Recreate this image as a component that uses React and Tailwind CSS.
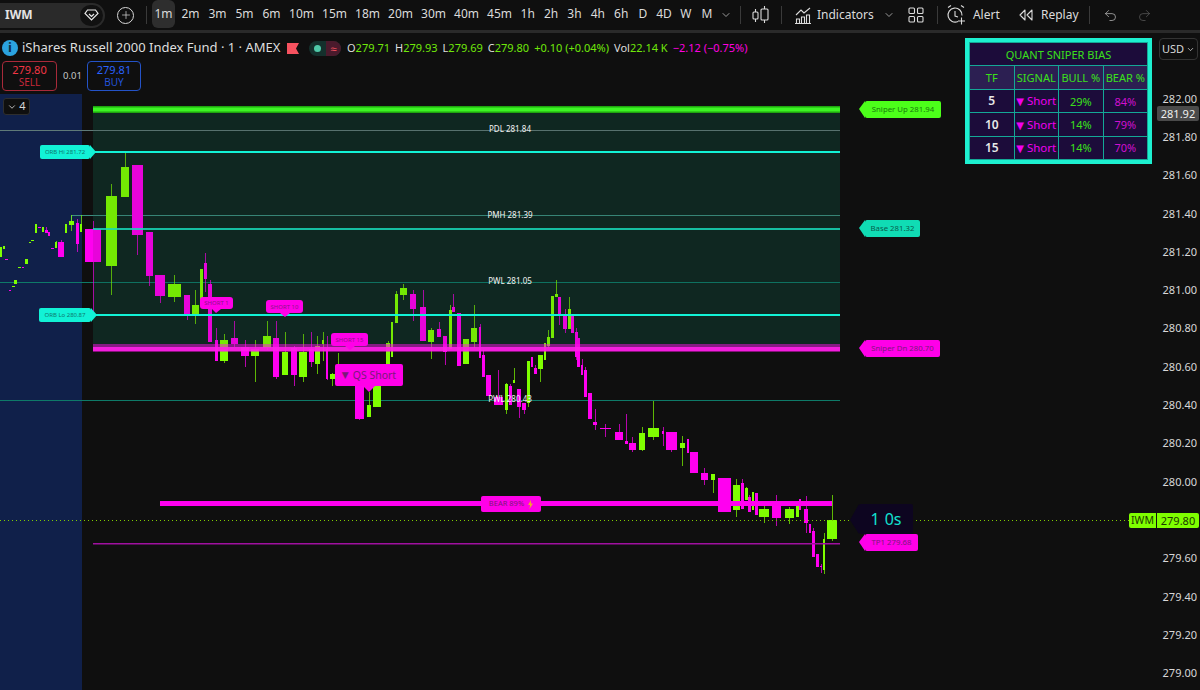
import { ChevronDown, Plus, Redo2, Undo2 } from 'lucide-react'

const intervals = [
  { label: '1m', cls: 'w-[23px] mx-[2px] bg-[#2e2e2e] rounded-md' },
  { label: '2m', cls: 'w-[27px]' },
  { label: '3m', cls: 'w-[27px]' },
  { label: '5m', cls: 'w-[27px]' },
  { label: '6m', cls: 'w-[27px]' },
  { label: '10m', cls: 'w-[33px]' },
  { label: '15m', cls: 'w-[33px]' },
  { label: '18m', cls: 'w-[33px]' },
  { label: '20m', cls: 'w-[33px]' },
  { label: '30m', cls: 'w-[33px]' },
  { label: '40m', cls: 'w-[33px]' },
  { label: '45m', cls: 'w-[33px]' },
  { label: '1h', cls: 'w-[23.4px]' },
  { label: '2h', cls: 'w-[23.4px]' },
  { label: '3h', cls: 'w-[23.4px]' },
  { label: '4h', cls: 'w-[23.4px]' },
  { label: '6h', cls: 'w-[23.4px]' },
  { label: 'D', cls: 'w-[20px]' },
  { label: '4D', cls: 'w-[22px]' },
  { label: 'W', cls: 'w-[22px]' },
  { label: 'M', cls: 'w-[20px]' },
]

// 279.80 sits under the IWM tag, so that step stays empty
const prices = ['282.00', '281.80', '281.60', '281.40', '281.20', '281.00', '280.80', '280.60', '280.40', '280.20', '280.00', '', '279.60', '279.40', '279.20', '279.00']

const bias = [
  { tf: '5', bull: '29%', bear: '84%' },
  { tf: '10', bull: '14%', bear: '79%' },
  { tf: '15', bull: '14%', bear: '70%' },
]

// x0, x1, bodyTop, bodyBottom, wickTop, wickBottom, colour
const candles = [
  [0, 2, 247, 257, 247, 257, 'g'], [3, 5, 246, 249, 246, 249, 'g'], [5, 8, 259, 260, 259, 260, 'p'],
  [25, 28, 259, 264, 259, 264, 'g'], [18, 21, 267, 268, 267, 268, 'g'], [22, 24, 267, 268, 267, 268, 'p'],
  [14, 17, 280, 284, 280, 284, 'g'], [12, 15, 286, 287, 286, 287, 'g'], [9, 11, 290, 291, 290, 291, 'p'],
  [29, 31, 242, 243, 242, 243, 'g'], [31, 34, 240, 241, 240, 241, 'g'], [35, 37, 224, 233, 224, 233, 'g'],
  [38, 41, 227, 228, 227, 228, 'p'], [42, 44, 227, 232, 227, 232, 'g'], [45, 48, 230, 233, 227, 233, 'p'],
  [48, 50, 232, 236, 232, 236, 'p'], [51, 54, 248, 249, 248, 249, 'p'], [55, 57, 242, 248, 241, 248, 'g'],
  [58, 64, 242, 257, 240, 257, 'p'], [65, 67, 224, 233, 224, 233, 'g'], [69, 74, 221, 225, 215, 231, 'g'],
  [76, 79, 223, 244, 219, 252, 'p'], [80, 82, 224, 232, 215, 232, 'g'],
  [85, 101, 229, 262, 221, 313, 'p'], [106, 117, 196, 266, 184, 295, 'g'], [121, 129, 167, 197, 153, 197, 'g'],
  [132, 143, 165, 235, 165, 255, 'p'], [146, 153, 232, 276, 232, 286, 'p'], [155, 165, 275, 296, 275, 303, 'p'],
  [168, 181, 284, 297, 275, 302, 'g'], [184, 190, 295, 315, 295, 320, 'p'], [192, 199, 305, 315, 290, 324, 'g'],
  [200, 203, 269, 305, 269, 305, 'g'], [204, 207, 263, 279, 253, 292, 'p'], [208, 212, 284, 342, 280, 342, 'p'],
  [215, 218, 340, 361, 328, 361, 'p'], [220, 228, 340, 361, 334, 363, 'g'], [231, 238, 338, 344, 321, 347, 'p'],
  [241, 249, 347, 356, 340, 367, 'p'], [251, 259, 349, 356, 340, 382, 'g'], [263, 271, 336, 348, 321, 350, 'g'],
  [273, 279, 338, 377, 321, 379, 'p'], [282, 288, 352, 375, 332, 375, 'g'], [291, 297, 348, 375, 346, 386, 'p'],
  [299, 307, 352, 377, 334, 382, 'g'], [309, 314, 349, 362, 332, 367, 'p'], [315, 320, 346, 364, 336, 374, 'g'],
  [322, 324, 340, 344, 332, 361, 'g'], [326, 328, 349, 379, 336, 380, 'p'], [330, 335, 374, 379, 373, 386, 'g'],
  [337, 339, 365, 367, 353, 367, 'g'], [355, 364, 385, 419, 385, 420, 'p'], [367, 371, 405, 417, 392, 417, 'g'],
  [373, 381, 385, 407, 385, 407, 'g'], [386, 390, 343, 364, 341, 364, 'g'], [391, 393, 322, 357, 322, 357, 'g'],
  [395, 398, 294, 323, 291, 323, 'g'], [400, 407, 288, 295, 284, 300, 'g'], [410, 416, 294, 309, 290, 321, 'p'],
  [420, 426, 307, 341, 290, 341, 'p'], [428, 434, 330, 342, 328, 359, 'g'], [437, 441, 329, 337, 322, 337, 'p'],
  [443, 447, 336, 352, 336, 365, 'p'], [449, 452, 310, 349, 305, 349, 'g'], [452, 455, 307, 312, 294, 312, 'p'],
  [457, 461, 313, 366, 313, 366, 'p'], [463, 469, 339, 364, 339, 364, 'g'], [471, 477, 328, 342, 305, 348, 'g'],
  [479, 481, 327, 358, 324, 358, 'p'], [482, 485, 355, 377, 350, 377, 'p'], [486, 491, 375, 396, 375, 396, 'p'],
  [494, 503, 397, 405, 370, 405, 'p'], [505, 508, 384, 410, 383, 414, 'g'], [509, 512, 386, 405, 384, 405, 'p'],
  [513, 515, 380, 383, 368, 383, 'g'], [517, 521, 389, 407, 389, 418, 'p'], [522, 526, 403, 410, 403, 414, 'p'],
  [527, 530, 361, 403, 361, 407, 'g'], [531, 533, 357, 367, 357, 367, 'p'], [534, 537, 368, 374, 365, 374, 'p'],
  [538, 543, 355, 369, 355, 382, 'g'], [544, 546, 343, 360, 343, 360, 'g'], [547, 550, 337, 346, 330, 348, 'g'],
  [551, 554, 296, 338, 296, 338, 'g'], [555, 558, 294, 297, 280, 297, 'g'], [558, 561, 297, 314, 297, 325, 'p'],
  [563, 567, 314, 329, 309, 333, 'p'], [568, 571, 309, 329, 297, 329, 'g'], [571, 574, 314, 333, 314, 333, 'p'],
  [575, 578, 332, 357, 328, 360, 'p'], [577, 580, 338, 367, 338, 367, 'p'], [581, 583, 365, 375, 359, 375, 'p'],
  [584, 587, 370, 397, 367, 397, 'p'], [588, 592, 393, 419, 393, 419, 'p'], [593, 597, 422, 425, 409, 430, 'p'],
  [600, 611, 428, 429, 424, 437, 'p'], [615, 623, 432, 440, 424, 440, 'p'], [625, 628, 441, 444, 414, 444, 'p'],
  [629, 636, 443, 450, 437, 452, 'p'], [639, 645, 433, 450, 427, 451, 'g'], [648, 659, 428, 437, 401, 440, 'g'],
  [662, 664, 431, 434, 427, 446, 'p'], [666, 677, 432, 450, 432, 452, 'p'], [680, 685, 443, 448, 436, 466, 'g'],
  [687, 689, 439, 453, 439, 453, 'p'], [690, 698, 452, 473, 452, 473, 'p'], [701, 708, 473, 480, 468, 485, 'p'],
  [711, 715, 474, 480, 474, 493, 'g'], [718, 731, 478, 512, 478, 512, 'p'], [733, 740, 485, 510, 479, 517, 'g'],
  [741, 744, 483, 509, 479, 509, 'p'], [745, 748, 488, 500, 487, 500, 'g'], [748, 751, 497, 512, 495, 512, 'p'],
  [752, 754, 492, 510, 492, 510, 'g'], [755, 758, 493, 515, 493, 515, 'p'], [759, 769, 509, 517, 506, 523, 'g'],
  [772, 781, 505, 518, 495, 526, 'p'], [785, 794, 509, 518, 507, 524, 'g'], [796, 799, 506, 517, 506, 517, 'g'],
  [799, 801, 499, 510, 499, 510, 'p'], [804, 808, 509, 523, 496, 533, 'p'], [809, 811, 524, 533, 524, 533, 'p'],
  [812, 815, 531, 557, 528, 557, 'p'], [816, 819, 554, 567, 554, 567, 'p'], [820, 822, 566, 567, 564, 573, 'p'],
  [823, 825, 539, 570, 533, 574, 'g'], [827, 837, 520, 539, 495, 541, 'g'],
]

function Chart() {
  return (
    <svg className="absolute inset-0" width="1157" height="657" viewBox="0 33 1157 657">
      <rect x="0" y="33" width="82" height="657" fill="#10204a" />
      <rect x="93" y="107" width="747" height="242" fill="#0f2722" />
      <line x1="0" y1="130.5" x2="840" y2="130.5" stroke="#5f7a78" />
      <line x1="71" y1="215.5" x2="840" y2="215.5" stroke="#3c8f80" />
      <line x1="71.5" y1="215" x2="71.5" y2="225" stroke="#3c8f80" />
      <line x1="0" y1="282.5" x2="840" y2="282.5" stroke="#0e7a68" />
      <line x1="0" y1="400.5" x2="840" y2="400.5" stroke="#0e7a68" />
      {candles.map(([x0, x1, top, bottom, wickTop, wickBottom, c], i) => {
        const fill = c === 'g' ? '#7fff00' : '#ff00f0'
        const mid = Math.floor((x0 + x1) / 2) + 0.5
        return (
          <g key={i}>
            <line x1={mid} y1={wickTop} x2={mid} y2={wickBottom} stroke={fill} strokeOpacity="0.7" />
            <rect x={x0} y={top} width={x1 - x0} height={bottom - top} fill={fill} />
          </g>
        )
      })}
      <rect x="93" y="107" width="747" height="242" fill="#0f2722" fillOpacity="0.1" />
      <line x1="93" y1="229" x2="840" y2="229" stroke="#18d8b8" strokeOpacity="0.85" strokeWidth="2" />
      <line x1="90" y1="152" x2="840" y2="152" stroke="#12f2d6" strokeWidth="2" />
      <line x1="90" y1="315" x2="840" y2="315" stroke="#12f2d6" strokeWidth="2" />
      <rect x="93" y="106" width="747" height="7" fill="#1fa50f" />
      <rect x="93" y="107.500" width="747" height="4" fill="#3cf524" />
      <rect x="93" y="344" width="747" height="8" fill="#ff10e8" fillOpacity="0.5" />
      <rect x="93" y="347" width="747" height="4" fill="#ff20e8" fillOpacity="0.9" />
      <rect x="160" y="501" width="672" height="5" fill="#ff00f0" />
      <rect x="93" y="543" width="747" height="1.5" fill="#a010a0" />
      <line x1="0" y1="520.5" x2="1130" y2="520.5" stroke="#7fcc00" strokeDasharray="1 3" />
      {/* arrows of the tags */}
      <polygon points="865,101 859,109 865,118" fill="#4cff1a" />
      <polygon points="865,220 859,228 865,237" fill="#10dcb4" />
      <polygon points="865,340 859,348 865,357" fill="#ff00e8" />
      <polygon points="865,534 859,542 865,551" fill="#ff00e8" />
      <polygon points="859,504 850,520 859,534" fill="#0d0520" />
      <polygon points="90,145 96,152 90,159" fill="#12f2d6" />
      <polygon points="91,308 97,315 91,322" fill="#12f2d6" />
      <polygon points="212,309 221,309 216,313" fill="#ff00e8" />
      <polygon points="280,313 290,313 285,317" fill="#ff00e8" />
      <polygon points="345,346 355,346 350,350" fill="#ff00e8" />
      <polygon points="363,386 375,386 369,392" fill="#ff00e8" />
    </svg>
  )
}

function Tag({ className, children }) {
  return <div className={`absolute flex items-center justify-center rounded-[2px] leading-none whitespace-nowrap ${className}`}>{children}</div>
}

function LevelText({ className, children }) {
  return <div className={`absolute -translate-x-1/2 text-[8px] leading-none whitespace-nowrap text-[#f2f2f2] ${className}`}>{children}</div>
}

function BiasTable() {
  const cell = 'border border-[#14a896] text-center p-0 whitespace-nowrap'
  return (
    <div className="absolute left-[965px] top-[5px] border-4 border-[#1df0d0] bg-[#1c0c3a]">
      <table className="border-collapse table-fixed w-[179px] text-[11px] leading-none">
        <tbody>
          <tr className="h-[23px]">
            <td colSpan={4} className={`${cell} text-[#3be01a]`}>QUANT SNIPER BIAS</td>
          </tr>
          <tr className="h-[24px] bg-[#2c1f52] text-[#3be01a]">
            <td className={`${cell} w-[24px]`}>TF</td>
            <td className={`${cell} w-[55px]`}>SIGNAL</td>
            <td className={`${cell} w-[50px]`}>BULL %</td>
            <td className={`${cell} w-[50px]`}>BEAR %</td>
          </tr>
          {bias.map((row) => (
            <tr key={row.tf} className="h-[23.4px]">
              <td className={`${cell} font-semibold text-[12px] text-[#e8e8e8]`}>{row.tf}</td>
              <td className={`${cell} text-[11.5px] text-[#f000f0]`}>
                <span className="font-['DejaVu_Sans',sans-serif] text-[10px]">▼</span> Short
              </td>
              <td className={`${cell} text-[#3be01a]`}>{row.bull}</td>
              <td className={`${cell} text-[#d010d0]`}>{row.bear}</td>
            </tr>
          ))}
        </tbody>
      </table>
    </div>
  )
}

function Legend() {
  return (
    <div className="absolute left-0 top-0 w-[150px] h-[61px] bg-[#0f0f0f] pl-[2px] pt-[28px]">
      <div className="flex items-center">
        <div className="w-[55px] h-[30px] shrink-0 border border-[#a82a3a] rounded-[4px] flex flex-col items-center justify-center leading-[13px]">
          <span className="text-[11px] text-[#f23645]">279.80</span>
          <span className="text-[10px] text-[#c8283a]">SELL</span>
        </div>
        <span className="ml-[6px] w-[17px] text-[9.5px] text-[#c8c8c8]">0.01</span>
        <div className="w-[54px] h-[30px] ml-[7px] shrink-0 border border-[#2453c8] rounded-[4px] flex flex-col items-center justify-center leading-[13px]">
          <span className="text-[11px] text-[#2962ff]">279.81</span>
          <span className="text-[10px] text-[#2453d8]">BUY</span>
        </div>
      </div>
    </div>
  )
}

function Toolbar() {
  return (
    <div className="h-[30px] flex items-center text-[12px] text-[#dbdbdb]">
      <div className="w-[105px] h-[25px] flex items-center justify-between bg-[#2a2a2a] rounded-r-full pl-[5px] pr-[2px] shrink-0">
        <span className="font-bold text-[12px] text-[#e4e4e4]">IWM</span>
        <div className="w-[23px] h-[21px] rounded-full bg-[#111] flex items-center justify-center">
          <svg width="15" height="12" viewBox="0 0 15 12" fill="none" stroke="#e8e8e8" strokeWidth="1.2">
            <path d="M3.5 1h8L14 4.5 7.5 11 1 4.5z" />
            <path d="M5 5l2.5 2.5L10 5" />
          </svg>
        </div>
      </div>
      <div className="w-[41px] flex justify-center shrink-0">
        <div className="w-[17px] h-[17px] rounded-full border border-[#d8d8d8] flex items-center justify-center">
          <Plus size={12} strokeWidth={1.4} />
        </div>
      </div>
      <div className="w-px h-[18px] bg-[#3a3a3a] shrink-0" />
      <div className="w-[3px] shrink-0" />
      {intervals.map((item) => (
        <div key={item.label} className={`h-[28px] -mt-[2px] flex items-center justify-center shrink-0 ${item.cls}`}>{item.label}</div>
      ))}
      <div className="w-[18px] flex justify-center shrink-0">
        <ChevronDown size={12} color="#9a9a9a" />
      </div>
      <div className="w-px h-[18px] bg-[#3a3a3a] ml-[5px] shrink-0" />
      <div className="w-[40px] flex justify-center shrink-0">
        <svg width="20" height="20" viewBox="0 0 20 20" fill="none" stroke="#dbdbdb" strokeWidth="1.1">
          <rect x="2" y="7" width="5" height="7" rx="1" />
          <path d="M4.5 4v3M4.5 14v3" />
          <rect x="10" y="4" width="7" height="11" rx="1" />
          <path d="M13.5 1v3M13.5 15v3" />
        </svg>
      </div>
      <div className="w-px h-[18px] bg-[#3a3a3a] shrink-0" />
      <div className="w-[31px] flex justify-end shrink-0">
        <svg width="18" height="18" viewBox="0 0 18 18" fill="none" stroke="#dbdbdb" strokeWidth="1.1">
          <path d="M1 9l5-5 3 3 6-5" />
          <path d="M1.5 17v-4h3v4M6.5 17v-6h3v6M11.5 17v-8h3v8M0 17.5h16" />
        </svg>
      </div>
      <span className="ml-[4px] w-[54px] shrink-0 whitespace-nowrap">Indicators</span>
      <div className="w-[36px] flex justify-center shrink-0">
        <ChevronDown size={12} color="#9a9a9a" />
      </div>
      <div className="w-[18px] flex justify-center shrink-0">
        <svg width="16" height="16" viewBox="0 0 16 16" fill="none" stroke="#dbdbdb" strokeWidth="1.1">
          <rect x="1" y="1" width="5.5" height="5.5" rx="1" />
          <rect x="9.5" y="1" width="5.5" height="5.5" rx="1" />
          <rect x="1" y="9.5" width="5.5" height="5.5" rx="1" />
          <rect x="9.5" y="9.5" width="5.5" height="5.5" rx="1" />
        </svg>
      </div>
      <div className="w-px h-[18px] bg-[#3a3a3a] ml-[12px] shrink-0" />
      <div className="ml-[2px] w-[33px] flex justify-center shrink-0">
        <svg width="20" height="22" viewBox="0 0 20 22" fill="none" stroke="#dbdbdb" strokeWidth="1.1">
          <path d="M12 17.4A7 7 0 1 1 16 11.5" />
          <path d="M9 7v5l3 1" />
          <path d="M2 3.5l3-2M15 1.5l3 2" />
          <path d="M15.5 13.5v7M12 17h7" />
        </svg>
      </div>
      <span className="w-[27px] shrink-0">Alert</span>
      <div className="ml-[19px] w-[14px] shrink-0">
        <svg width="14" height="12" viewBox="0 0 14 12" fill="none" stroke="#dbdbdb" strokeWidth="1.1" strokeLinejoin="round">
          <path d="M6 1L1 6l5 5zM13 1L8 6l5 5z" />
        </svg>
      </div>
      <span className="ml-[8px] w-[36px] shrink-0">Replay</span>
      <div className="w-px h-[18px] bg-[#3a3a3a] ml-[12px] shrink-0" />
      <div className="ml-[13px] w-[15px] shrink-0">
        <Undo2 size={15} strokeWidth={1.2} color="#b8b8b8" />
      </div>
      <div className="ml-[19px] w-[15px] shrink-0">
        <Redo2 size={15} strokeWidth={1.2} color="#5a5a5a" />
      </div>
    </div>
  )
}

export default function App() {
  return (
    <div className="relative w-[1200px] h-[690px] overflow-hidden bg-[#0f0f0f] font-['Noto_Sans',sans-serif]">
      <Toolbar />
      <div className="h-[3px] bg-[#2a2a2a]" />

      <div className="flex h-[657px]">
        <div className="relative w-[1157px] shrink-0">
          <Chart />
          <Legend />

          {/* symbol line */}
          <div className="absolute left-0 top-[4px] h-[22px] flex items-center whitespace-nowrap">
            <div className="ml-[2px] w-[16px] h-[16px] rounded-full bg-[#2ba3e0] flex items-center justify-center text-[#10304a] font-bold text-[13px]">i</div>
            <span className="ml-[4px] w-[265px] text-[13px] text-[#dedede]">iShares Russell 2000 Index Fund · 1 · AMEX</span>
            <svg width="12" height="11" viewBox="0 0 12 11">
              <path d="M0 0h12L9 5.5 12 11H0z" fill="#f7525f" />
            </svg>
            <div className="ml-[10px] w-[32px] h-[15px] rounded-full bg-[#14302c] flex overflow-hidden items-center">
              <div className="w-[17px] flex justify-center">
                <div className="w-[7px] h-[7px] rounded-full bg-[#4fc9a8]" />
              </div>
              <div className="w-[15px] h-full bg-[#4a1a2c] text-[#f7525f] text-[11px] leading-[15px] text-center">≈</div>
            </div>
            <div className="ml-[6px] flex gap-[5px] text-[11px] text-[#6fe80a]">
              <span><span className="text-[#dedede]">O</span>279.71</span>
              <span><span className="text-[#dedede]">H</span>279.93</span>
              <span><span className="text-[#dedede]">L</span>279.69</span>
              <span><span className="text-[#dedede]">C</span>279.80</span>
              <span>+0.10 (+0.04%)</span>
              <span><span className="text-[#dedede]">Vol</span>22.14 K</span>
              <span className="text-[#ff00e0]">−2.12 (−0.75%)</span>
            </div>
          </div>

          <div className="absolute left-[3px] top-[65px] w-[27px] h-[17px] flex items-center justify-center gap-[2px] border border-[#2e2e2e] rounded-[3px] bg-[#0f0f0f] text-[11px] text-[#d8d8d8]">
            <ChevronDown size={10} />
            <span>4</span>
          </div>

          <LevelText className="left-[510px] top-[92px]">PDL 281.84</LevelText>
          <LevelText className="left-[510px] top-[178px]">PMH 281.39</LevelText>
          <LevelText className="left-[510px] top-[244px]">PWL 281.05</LevelText>
          <LevelText className="left-[510px] top-[362px]">PWL 280.43</LevelText>

          <Tag className="left-[40px] top-[112px] w-[50px] h-[14px] bg-[#12f2d6] text-[#0e7a70] text-[6px]">ORB Hi 281.72</Tag>
          <Tag className="left-[39px] top-[275px] w-[52px] h-[14px] bg-[#12f2d6] text-[#0e7a70] text-[6px]">ORB Lo 280.87</Tag>
          <Tag className="left-[865px] top-[68px] w-[76px] h-[17px] bg-[#4cff1a] text-[#177a0c] text-[7.8px]">Sniper Up 281.94</Tag>
          <Tag className="left-[865px] top-[187px] w-[55px] h-[17px] bg-[#10dcb4] text-[#085c4e] text-[7.8px]">Base 281.32</Tag>
          <Tag className="left-[865px] top-[307px] w-[75px] h-[17px] bg-[#ff00e8] text-[#7a1a7a] text-[7.8px]">Sniper Dn 280.70</Tag>
          <Tag className="left-[865px] top-[501px] w-[53px] h-[17px] bg-[#ff00e8] text-[#7a1a7a] text-[7.8px]">TP1 279.68</Tag>
          <Tag className="left-[481px] top-[463px] w-[60px] h-[16px] gap-[4px] bg-[#ff00e8] text-[#7a1a7a] text-[7.5px]">
            BEAR 89%
            <svg width="5" height="9" viewBox="0 0 5 9">
              <path d="M3 0L0 5h2L1.500 9 5 3.500H3z" fill="#f0a030" />
            </svg>
          </Tag>
          <Tag className="left-[200px] top-[264px] w-[33px] h-[12px] rounded-[3px] bg-[#ff00e8] text-[#8e1488] text-[6px]">SHORT 1</Tag>
          <Tag className="left-[266px] top-[267px] w-[37px] h-[13px] rounded-[3px] bg-[#ff00e8] text-[#8e1488] text-[6px]">SHORT 10</Tag>
          <Tag className="left-[331px] top-[300px] w-[37px] h-[13px] rounded-[3px] bg-[#ff00e8] text-[#8e1488] text-[6px]">SHORT 15</Tag>
          <Tag className="left-[335px] top-[331px] w-[68px] h-[22px] gap-[4px] bg-[#ff00e8] text-[#7a1a7a] text-[10.5px]">
            <span className="font-['DejaVu_Sans',sans-serif] text-[9px]">▼</span>
            <span>QS Short</span>
          </Tag>
          <Tag className="left-[859px] top-[471px] w-[54px] h-[30px] gap-[5px] bg-[#0d0520] text-[#12e0d0] text-[16px]">
            <span>1</span>
            <span>0s</span>
          </Tag>

          <BiasTable />
        </div>

        {/* price scale */}
        <div className="relative w-[43px] shrink-0">
          <div className="absolute left-[2px] top-[5px] w-[39px] h-[22px] border border-[#333] rounded-[4px] flex items-center justify-center gap-[2px] text-[11px] text-[#d8d8d8]">
            USD
            <ChevronDown size={9} />
          </div>
          <div className="pt-[46px] flex flex-col items-end pr-[3px]">
            {prices.map((p, i) => (
              <div key={i} className="h-[38.3px] flex items-center text-[11px] leading-none text-[#d8d8d8]">{p}</div>
            ))}
          </div>
          <div className="absolute left-0 top-[73px] w-[42px] h-[15px] rounded-[2px] bg-[#4a4a4a] text-[#efefef] text-[11px] leading-[15px] text-center">281.92</div>
          <div className="absolute -left-[28px] top-[480px] w-[70px] h-[15px] flex text-[11px] leading-[15px] text-[#1c3a00] gap-px">
            <div className="w-[27px] bg-[#7fff00] rounded-l-[2px] text-center text-[10.5px]">IWM</div>
            <div className="w-[42px] bg-[#7fff00] rounded-r-[2px] text-center">279.80</div>
          </div>
        </div>
      </div>
    </div>
  )
}
